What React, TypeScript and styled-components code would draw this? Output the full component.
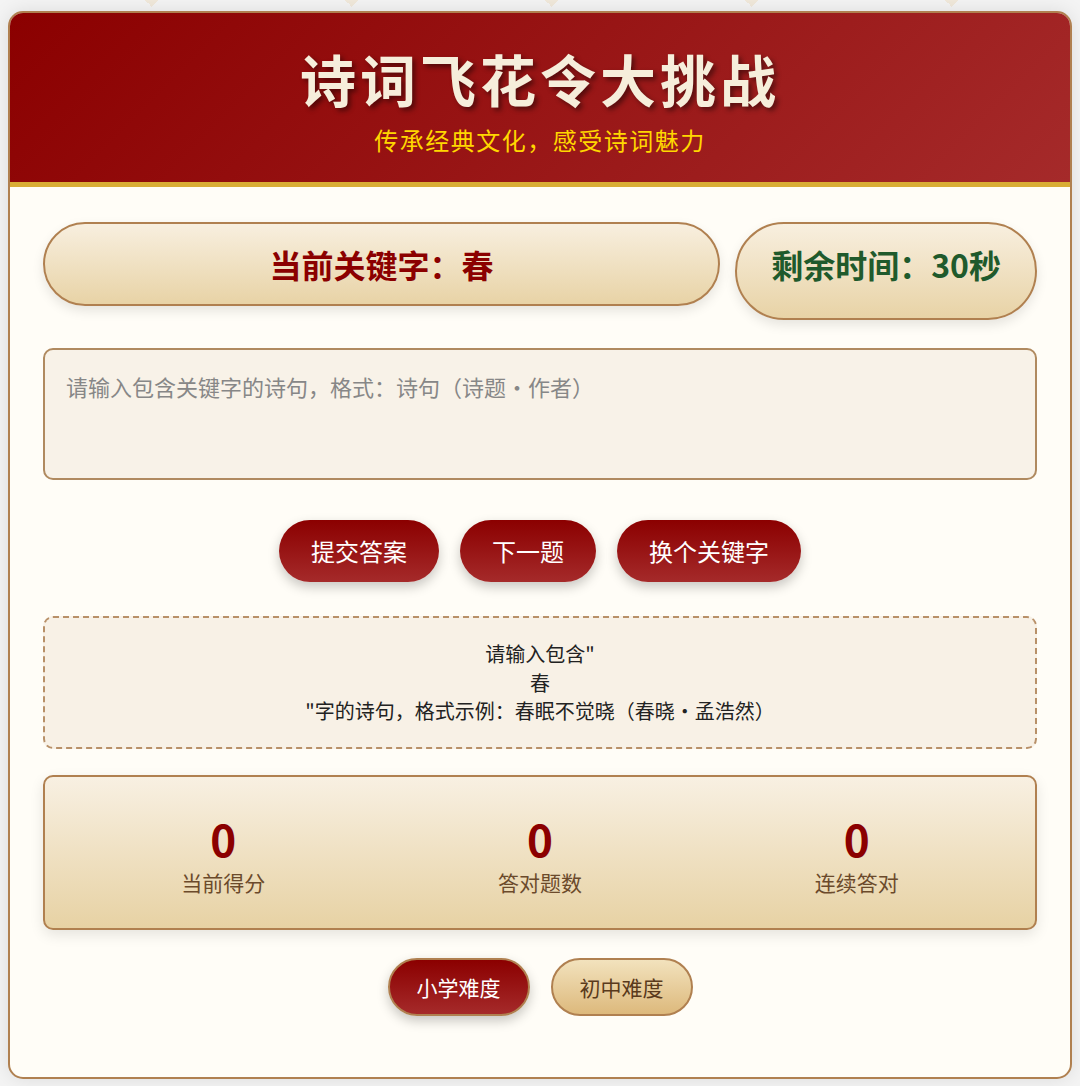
import styled, { createGlobalStyle } from "styled-components";
import { useState } from "react";

const GlobalStyle = createGlobalStyle`
	html, body {
		margin: 0;
		padding: 0;
	}

	body {
		padding: 11px 8px 8px;
		font-family: "Microsoft YaHei", "Noto Sans CJK SC", "Noto Sans", sans-serif;
		background-color: #f4f4f4;
		/* row of little beige points along the top edge */
		background-image: conic-gradient(from -45deg at 152px 7px, #f1e9db 0deg 90deg, transparent 90deg);
		background-size: 200px 7px;
		background-repeat: repeat-x;
		background-position: 0 0;
	}
`;

const Card = styled.div`
	box-sizing: border-box;
	width: 100%;
	border: 2px solid #b08050;
	border-radius: 15px;
	overflow: hidden;
	background-color: #fffdf7;
	box-shadow: 0 0 20px rgba(0, 0, 0, 0.1);
`;

const Header = styled.header`
	padding: 31px 20px 24px;
	text-align: center;
	background: linear-gradient(135deg, #8b0000 0%, #a52a2a 100%);
	border-bottom: 5px solid #d9ad35;

	h1 {
		margin: 0 0 11px;
		font-size: 56px;
		line-height: 67px;
		font-weight: 700;
		letter-spacing: 4px;
		color: #f6eedb;
		text-shadow: 3px 3px 5px rgba(0, 0, 0, 0.45);
	}

	p {
		margin: 0;
		font-size: 24px;
		line-height: 36px;
		letter-spacing: 1.5px;
		color: #ffd700;
	}
`;

const Body = styled.main`
	padding: 35px 33px 61px;
`;

const StatusRow = styled.div`
	display: flex;
	align-items: flex-start;
	gap: 15px;
`;

const Pill = styled.div<{ $tone: "red" | "green"; $wide?: boolean }>`
	box-sizing: border-box;
	flex: ${({ $wide }) => ($wide ? "1" : "0 0 auto")};
	padding: ${({ $wide }) => ($wide ? "22px 30px" : "22px 34px 36px")};
	border: 2px solid #b08050;
	border-radius: 50px;
	background: linear-gradient(to bottom, #f8efdf 0%, #e8d3a6 100%);
	box-shadow: 0 5px 12px rgba(0, 0, 0, 0.1);
	text-align: center;
	white-space: nowrap;
	font-size: 32px;
	line-height: 36px;
	font-weight: 700;
	color: ${({ $tone }) => ($tone === "red" ? "#8b0000" : "#1f5a2c")};
`;

const AnswerInput = styled.textarea`
	display: block;
	box-sizing: border-box;
	width: 100%;
	height: 132px;
	margin-top: 28px;
	padding: 20px 21px;
	border: 2px solid #b08a60;
	border-radius: 10px;
	background-color: #f8f2e8;
	font-family: inherit;
	font-size: 22px;
	line-height: 32px;
	color: #333;
	resize: none;
	outline: none;

	&::placeholder {
		color: #878787;
	}
`;

const ButtonRow = styled.div<{ $top: number }>`
	display: flex;
	justify-content: center;
	gap: 21px;
	margin-top: ${({ $top }) => $top}px;
`;

const ActionButton = styled.button`
	padding: 13px 32px;
	border: none;
	border-radius: 40px;
	background: linear-gradient(to bottom, #8b0000 0%, #a52a2a 100%);
	box-shadow: 0 5px 12px rgba(0, 0, 0, 0.22);
	font-family: inherit;
	font-size: 24px;
	line-height: 36px;
	color: #fff;
	cursor: pointer;
`;

const Hint = styled.div`
	margin-top: 34px;
	padding: 22px 20px 21px;
	border: 2px dashed #b89068;
	border-radius: 10px;
	background-color: #f8f1e6;
	text-align: center;
	font-size: 20px;
	line-height: 28.5px;
	color: #222;
`;

const Stats = styled.div`
	display: grid;
	grid-template-columns: repeat(3, 1fr);
	margin-top: 26px;
	padding: 35px 20px 29px;
	border: 2px solid #b08050;
	border-radius: 10px;
	background: linear-gradient(to bottom, #f8f0e2 0%, #e7d2a4 100%);
	box-shadow: 0 5px 14px rgba(0, 0, 0, 0.1);
`;

const Stat = styled.div`
	display: flex;
	flex-direction: column;
	align-items: center;

	strong {
		font-size: 44px;
		line-height: 53px;
		font-weight: 700;
		color: #8b0000;
	}

	span {
		font-size: 21px;
		line-height: 34px;
		color: #6b4a2b;
	}
`;

const LevelButton = styled.button<{ $active?: boolean }>`
	padding: 10px 27px;
	border: 2px solid #b08050;
	border-radius: 40px;
	background: ${({ $active }) =>
		$active
			? "linear-gradient(to bottom, #8b0000 0%, #a52a2a 100%)"
			: "linear-gradient(to bottom, #f2e2bd 0%, #ddb97c 100%)"};
	box-shadow: ${({ $active }) => ($active ? "0 5px 12px rgba(0, 0, 0, 0.22)" : "none")};
	font-family: inherit;
	font-size: 21px;
	line-height: 34px;
	color: ${({ $active }) => ($active ? "#fff" : "#5a3a1c")};
	cursor: pointer;
`;

const stats = [
	{ value: 0, label: "当前得分" },
	{ value: 0, label: "答对题数" },
	{ value: 0, label: "连续答对" },
];

const App = () => {
	const keyword = "春";
	const [answer, setAnswer] = useState<string>("");
	const [level, setLevel] = useState<string>("primary");

	return (
		<>
			<GlobalStyle />
			<Card>
				<Header>
					<h1>诗词飞花令大挑战</h1>
					<p>传承经典文化，感受诗词魅力</p>
				</Header>

				<Body>
					<StatusRow>
						<Pill $tone="red" $wide>当前关键字：{ keyword }</Pill>
						<Pill $tone="green">剩余时间：30秒</Pill>
					</StatusRow>

					<AnswerInput
						value={ answer }
						onChange={ (e) => setAnswer(e.target.value) }
						placeholder="请输入包含关键字的诗句，格式：诗句（诗题·作者）"
					/>

					<ButtonRow $top={ 40 }>
						<ActionButton>提交答案</ActionButton>
						<ActionButton>下一题</ActionButton>
						<ActionButton>换个关键字</ActionButton>
					</ButtonRow>

					<Hint>
						请输入包含"<div>{ keyword }</div>"字的诗句，格式示例：春眠不觉晓（春晓·孟浩然）
					</Hint>

					<Stats>
						{ stats.map((s) => (
							<Stat key={ s.label }>
								<strong>{ s.value }</strong>
								<span>{ s.label }</span>
							</Stat>
						)) }
					</Stats>

					<ButtonRow $top={ 28 }>
						<LevelButton $active={ level === "primary" } onClick={ () => setLevel("primary") }>小学难度</LevelButton>
						<LevelButton $active={ level === "junior" } onClick={ () => setLevel("junior") }>初中难度</LevelButton>
					</ButtonRow>
				</Body>
			</Card>
		</>
	);
};

export default App;
